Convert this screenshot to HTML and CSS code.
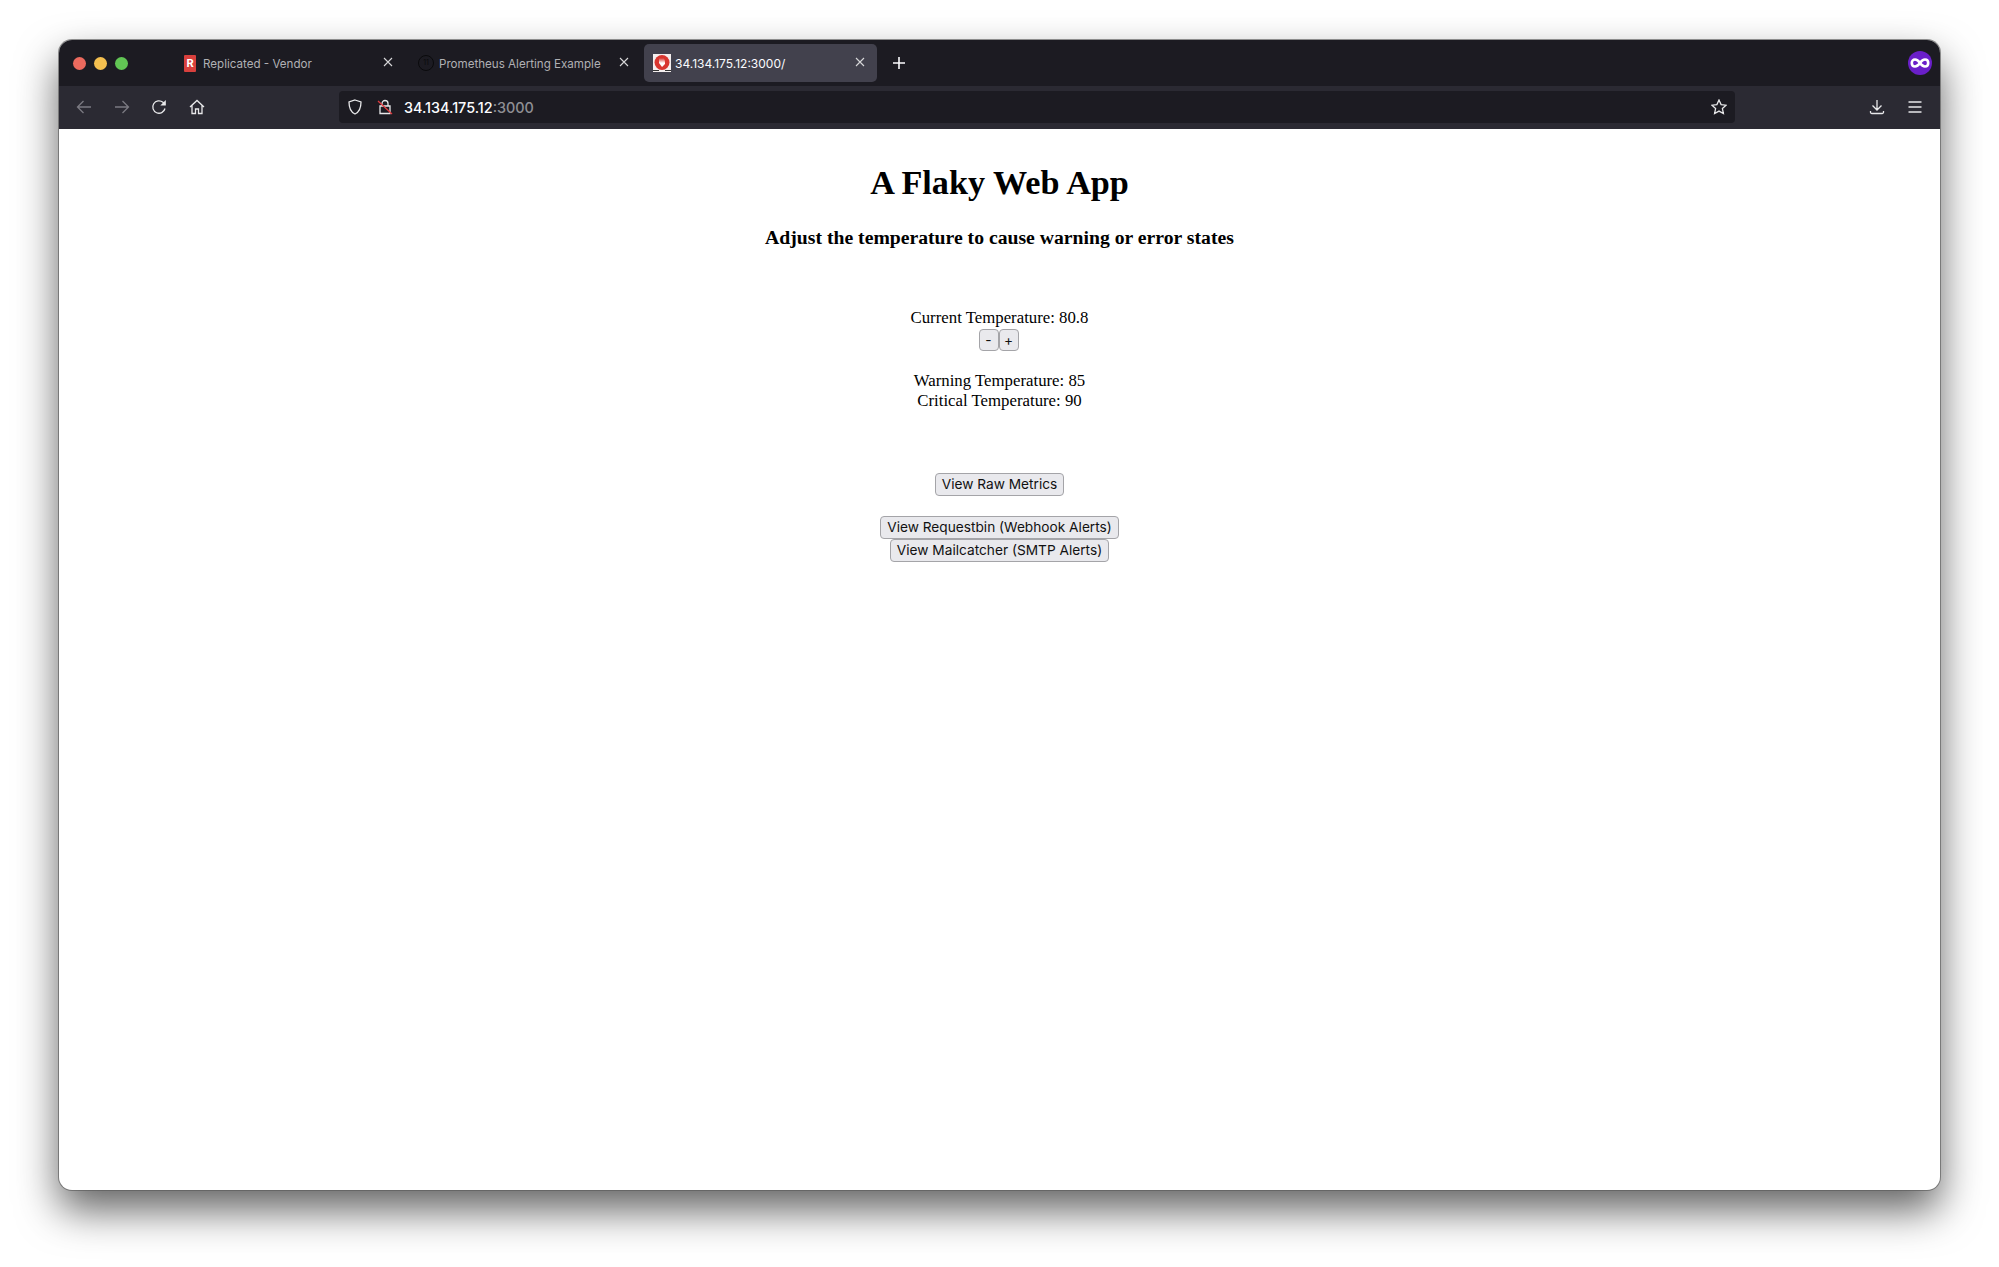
FILE: index.html
```html
<!DOCTYPE html>
<html lang="en">
<head>
<meta charset="utf-8">
<title>A Flaky Web App</title>
<link rel="stylesheet" href="styles.css">
</head>
<body>
<div class="window">
  <div class="tabbar">
    <div class="lights"><span class="light red"></span><span class="light yellow"></span><span class="light green"></span></div>
    <div class="tabs">
      <div class="tab">
        <span class="favicon"><span class="fav-r">R</span></span>
        <span class="tab-title">Replicated - Vendor</span>
        <svg class="close" viewBox="0 0 10 10"><path d="M1 1l8 8M9 1l-8 8"/></svg>
      </div>
      <div class="tab">
        <span class="favicon"><span class="fav-num">11</span></span>
        <span class="tab-title">Prometheus Alerting Example</span>
        <svg class="close" viewBox="0 0 10 10"><path d="M1 1l8 8M9 1l-8 8"/></svg>
      </div>
      <div class="tab active">
        <span class="favicon">
          <svg viewBox="0 0 18 18" width="18" height="18"><rect width="18" height="18" fill="#f4eeee"/><circle cx="9" cy="8.500" r="7.500" fill="#d8352f"/><path d="M6 4v5l3 4 3-3V5l-1 4-1-5-1 5-1-5-1 5z" fill="#fff"/><path d="M0 16.500h6M12 16.500h6" stroke="#333" stroke-width="1"/></svg>
        </span>
        <span class="tab-title">34.134.175.12:3000/</span>
        <svg class="close" viewBox="0 0 10 10"><path d="M1 1l8 8M9 1l-8 8"/></svg>
      </div>
    </div>
    <svg class="newtab" viewBox="0 0 14 14"><path d="M7 1v12M1 7h12"/></svg>
    <span class="account">
      <svg viewBox="0 0 24 24" width="24" height="24"><circle cx="12" cy="12" r="12" fill="#6a1fc9"/><path d="M12 12c-1.600-2.400-3-3.500-5-3.500-2 0-3.200 1.500-3.200 3.500S5 15.500 7 15.500c2 0 3.400-1.100 5-3.500zm0 0c1.600-2.400 3-3.500 5-3.500 2 0 3.200 1.500 3.200 3.500s-1.200 3.500-3.200 3.500c-2 0-3.400-1.100-5-3.500z" fill="#6a1fc9" stroke="#fff" stroke-width="2.600"/></svg>
    </span>
  </div>
  <div class="toolbar">
    <div class="nav">
      <svg class="icon dim" viewBox="0 0 16 16"><path d="M15 8H1.500M7.500 2L1.500 8l6 6"/></svg>
      <svg class="icon dim" viewBox="0 0 16 16"><path d="M1 8h13.500M8.500 2l6 6-6 6"/></svg>
      <svg class="icon" viewBox="0 0 16 16"><path d="M14 9.500A6.200 6.200 0 1 1 12 3.300L14 5.500"/><path d="M14.800 1v5.500h-5.500" class="filled"/></svg>
      <svg class="icon" viewBox="0 0 16 16"><path d="M1 8l7-6.500L15 8M3 6.500V14.500h3.500V10h3v4.500H13V6.500"/></svg>
    </div>
    <div class="urlbar">
      <svg class="icon shield" viewBox="0 0 16 16"><path d="M8 1l6 2c0 6-1.500 10-6 12C3.500 13 2 9 2 3z"/></svg>
      <svg class="icon lock" viewBox="0 0 16 16"><path d="M5 7V4.500a3 3 0 0 1 6 0V7M3 7h10v7.500H3z"/><path class="slash" d="M1 2l14 13"/></svg>
      <span class="url"><span class="host">34.134.175.12</span>:3000</span>
      <svg class="icon star" viewBox="0 0 16 16"><path d="M8 1l2.100 4.600 5 .6-3.700 3.400 1 5L8 12.100 3.600 14.600l1-5L.9 6.200l5-.6z"/></svg>
    </div>
    <div class="actions">
      <svg class="icon" viewBox="0 0 16 16"><path d="M8 1v10M3.500 6.500L8 11l4.500-4.500M1.500 12v1.200a1.300 1.300 0 0 0 1.300 1.300h10.400a1.300 1.300 0 0 0 1.300-1.300V12"/></svg>
      <svg class="icon" viewBox="0 0 16 16"><path d="M1.500 3h13M1.500 8h13M1.500 13h13"/></svg>
    </div>
  </div>
  <main class="page">
    <h1>A Flaky Web App</h1>
    <h3>Adjust the temperature to cause warning or error states</h3>
    <div class="temps">
      <div>Current Temperature: 80.8</div>
      <div class="steppers"><button class="btn">-</button><button class="btn">+</button></div>
      <div class="limits">Warning Temperature: 85<br>Critical Temperature: 90</div>
    </div>
    <div class="links">
      <button class="btn">View Raw Metrics</button>
      <div class="links-sub">
        <button class="btn">View Requestbin (Webhook Alerts)</button>
        <button class="btn">View Mailcatcher (SMTP Alerts)</button>
      </div>
    </div>
  </main>
</div>
</body>
</html>
```

FILE: styles.css
```css
* { box-sizing: border-box; }
html, body { margin: 0; height: 100%; background: #fff; overflow: hidden; }
body { padding: 40px 59px 0 59px; }

.window {
  height: 1150px;
  display: flex;
  flex-direction: column;
  border-radius: 13px;
  background: #fff;
  overflow: hidden;
  box-shadow: 0 0 0 1px rgba(90, 90, 90, .65), 0 20px 42px rgba(0, 0, 0, .62);
  font-family: Inter, sans-serif;
}

.tabbar {
  height: 46px;
  flex: none;
  display: flex;
  align-items: center;
  padding-left: 14px;
  background: #1c1b22;
  position: relative;
}
.lights { display: flex; gap: 8px; width: 99px; flex: none; margin-top: 1px; }
.light { width: 13px; height: 13px; border-radius: 50%; }
.red { background: #ec6a5e; }
.yellow { background: #f4bf4f; }
.green { background: #61c554; }

.tabs { display: flex; gap: 3px; }
.tab {
  width: 233px;
  height: 38px;
  padding: 0 12px 0 9px;
  display: flex;
  align-items: center;
  gap: 4px;
  border-radius: 5px;
  color: #b0b0b4;
  font-size: 11.600px;
}
.tab.active { background: #42414d; color: #fbfbfe; font-size: 12px; }
.favicon { width: 18px; height: 18px; flex: none; display: flex; align-items: center; justify-content: center; }
.fav-r {
  width: 12px; height: 17px;
  background: #d8403d;
  color: #fff;
  font-size: 11px;
  font-weight: 700;
  line-height: 17px;
  text-align: center;
  border-radius: 1px;
}
.fav-num {
  width: 16px; height: 16px;
  border-radius: 50%;
  border: 1.500px solid #0a0a0c;
  color: #0a0a0c;
  font-size: 7px;
  line-height: 13px;
  text-align: center;
}
.tab-title { flex: 1; white-space: nowrap; overflow: hidden; padding-top: 1px; }
.close { width: 10px; height: 10px; flex: none; fill: none; stroke: #d6d6d8; stroke-width: 1.100; margin-top: -2px; }
.newtab { width: 14px; height: 14px; margin-left: 15px; fill: none; stroke: #fbfbfe; stroke-width: 1.600; }
.account { margin-left: auto; margin-right: 8px; width: 24px; height: 24px; }

.toolbar {
  height: 43px;
  padding-bottom: 1px;
  flex: none;
  display: flex;
  align-items: center;
  background: #2b2a33;
}
.icon { width: 16px; height: 16px; flex: none; fill: none; stroke: #e8e8ea; stroke-width: 1.300; }
.icon.dim { stroke: #7b7a82; }
.icon .filled { fill: #e8e8ea; stroke: none; }
.icon .slash { stroke: #e0393e; }
.nav { display: flex; gap: 21.700px; padding-left: 17px; width: 280px; flex: none; }
.urlbar {
  width: 1396px;
  height: 32px;
  flex: none;
  display: flex;
  align-items: center;
  padding: 0 8px 0 8px;
  border-radius: 4px;
  background: #1c1b22;
}
.lock { margin-left: 14px; }
.url { margin-left: 11px; flex: 1; color: #8f8f94; font-size: 14.400px; font-weight: 500; }
.host { color: #fbfbfe; }
.actions { display: flex; gap: 22px; margin-left: 134px; }

.page {
  flex: 1;
  text-align: center;
  font-family: "Liberation Serif", serif;
  font-size: 16.800px;
  line-height: 20px;
  color: #000;
  padding-top: 34px;
}
h1 { margin: 0; font-size: 34.200px; line-height: 40px; font-weight: 700; }
h3 { margin: 22px 0 0; font-size: 19.700px; line-height: 24px; font-weight: 700; }
.temps { margin-top: 59px; }
.steppers { display: flex; justify-content: center; height: 22px; margin-top: 1px; padding-right: 2px; }
.limits { margin-top: 20px; }
.links { margin-top: 62px; display: flex; flex-direction: column; align-items: center; }
.links-sub { margin-top: 20px; display: flex; flex-direction: column; align-items: center; }
.btn {
  height: 23px;
  padding: 0 6px;
  border: 1px solid #a4a4a8;
  border-radius: 4px;
  background: #e9e9ed;
  color: #111;
  font-family: Inter, sans-serif;
  font-size: 13.700px;
  line-height: 21px;
}
.steppers .btn { width: 20px; height: 22px; padding: 0; }
```
